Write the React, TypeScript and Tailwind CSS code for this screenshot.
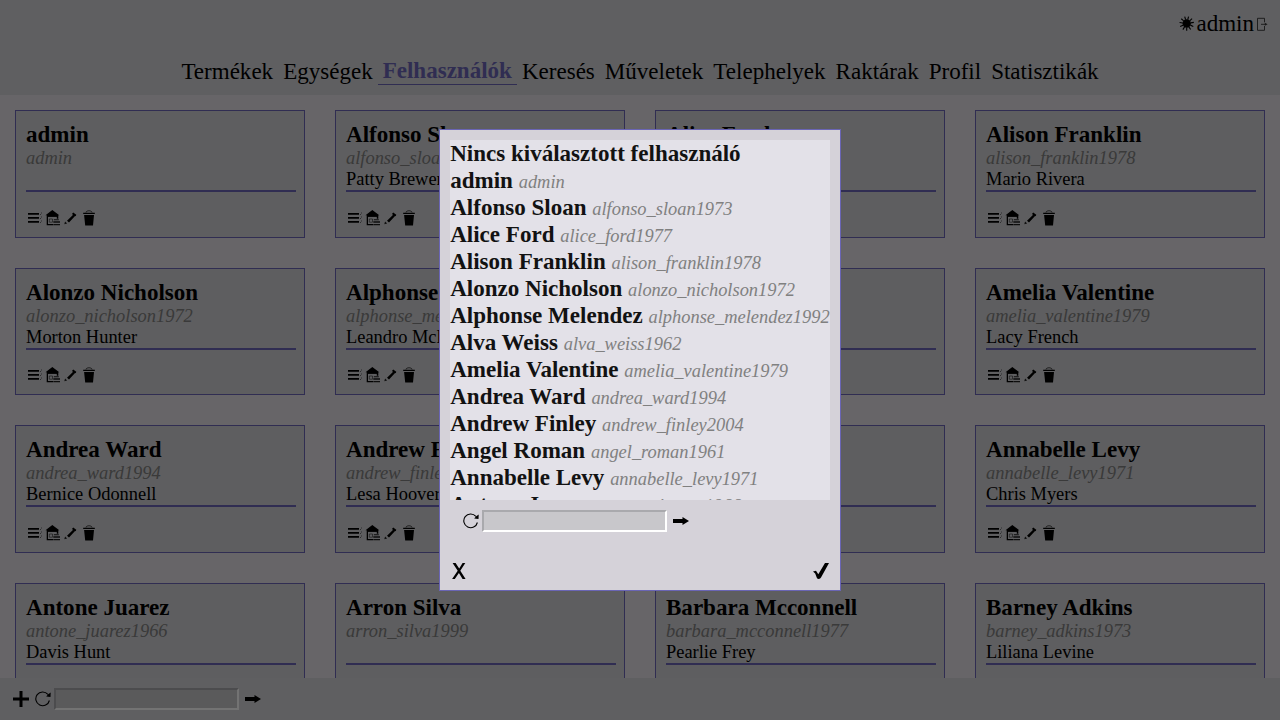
import type { ReactNode } from "react";

type User = { name: string; login: string; manager?: string };

const tabs = ["Termékek", "Egységek", "Felhasználók", "Keresés", "Műveletek", "Telephelyek", "Raktárak", "Profil", "Statisztikák"];

const users: User[] = [
  { name: "admin", login: "admin" },
  { name: "Alfonso Sloan", login: "alfonso_sloan1973", manager: "Patty Brewer" },
  { name: "Alice Ford", login: "alice_ford1977" },
  { name: "Alison Franklin", login: "alison_franklin1978", manager: "Mario Rivera" },
  { name: "Alonzo Nicholson", login: "alonzo_nicholson1972", manager: "Morton Hunter" },
  { name: "Alphonse Melendez", login: "alphonse_melendez1992", manager: "Leandro Mclean" },
  { name: "Alva Weiss", login: "alva_weiss1962" },
  { name: "Amelia Valentine", login: "amelia_valentine1979", manager: "Lacy French" },
  { name: "Andrea Ward", login: "andrea_ward1994", manager: "Bernice Odonnell" },
  { name: "Andrew Finley", login: "andrew_finley2004", manager: "Lesa Hoover" },
  { name: "Angel Roman", login: "angel_roman1961" },
  { name: "Annabelle Levy", login: "annabelle_levy1971", manager: "Chris Myers" },
  { name: "Antone Juarez", login: "antone_juarez1966", manager: "Davis Hunt" },
  { name: "Arron Silva", login: "arron_silva1999" },
  { name: "Barbara Mcconnell", login: "barbara_mcconnell1977", manager: "Pearlie Frey" },
  { name: "Barney Adkins", login: "barney_adkins1973", manager: "Liliana Levine" },
];

function Icon({ children, className = "" }: { children: ReactNode; className?: string }) {
  return (
    <svg viewBox="0 0 16 16" className={`block h-4 w-4 shrink-0 ${className}`} fill="currentColor">
      {children}
    </svg>
  );
}

const SunIcon = () => (
  <Icon>
    <circle cx="8.700" cy="7.500" r="4.2" />
    <g stroke="currentColor" strokeWidth="1.1">
      {[15, 48, 81, 114, 147, 180, 212, 245, 278, 311, 344].map((a) => (
        <path key={a} d="M8.700 3.500V.3" transform={`rotate(${a} 8.700 7.500)`} />
      ))}
    </g>
  </Icon>
);

const ExitIcon = () => (
  <svg viewBox="0 0 14 16" className="block h-4 w-[14px] shrink-0" fill="none" stroke="currentColor" strokeWidth="0.9" opacity=".75">
    <path d="M10.500 6.300V2.300h-7v12h7V10" />
    <path d="M7 8.300h5" />
    <path d="M10.800 6.800l2.800 1.500-2.800 1.500z" fill="currentColor" stroke="none" />
  </svg>
);

const ListIcon = () => (
  <Icon>
    <path d="M1 3.100h11v1.700H1zM1 7.100h11v1.700H1zM1 11.100h11v1.700H1z" />
    <path d="M14 2.500h1v1h-1zM13 4h1v1h-1zM14 6.500h1v1h-1zM13 8h1v1h-1zM14 10.500h1v1h-1zM13 12h1v1h-1z" opacity=".5" />
  </Icon>
);

const HouseIcon = () => (
  <Icon>
    <path d="M7.300 0L.5 5.300h1.200V15.300H8.500v-1.400H3V6.500h8.800V8.700h1.500V5.300h1z" />
    <path d="M2 4.800h10.500v2H2z" />
    <path d="M4.300 9h3.200v3.200H4.300z" fill="none" stroke="currentColor" strokeWidth=".6" opacity=".8" />
    <path d="M8.800 9.200h5v1h-5zM8.300 11.300h6.700v1.500H8.300zM8.800 14h6.200V15.300h-6.200z" opacity=".85" />
  </Icon>
);

const PencilIcon = () => (
  <Icon>
    <path d="M3 10.800L8.900 5 8.100 3.800 9.200 2.400 12.300 4.800 11.800 6 10.800 6.200 5 12.400z" />
    <path d="M1.100 11.500l2 2-2.800.800z" opacity=".85" />
  </Icon>
);

const TrashIcon = () => (
  <Icon>
    <path d="M5 2.500C5 .2 11 .2 11 2.500" fill="none" stroke="currentColor" strokeWidth=".9" opacity=".75" />
    <path d="M2.200 2.700h11.600v1.400H2.200zM3.100 5h9.900l-1 10.500H4.200z" />
  </Icon>
);

const PlusIcon = () => (
  <Icon>
    <path d="M6.500 0h3v6.500H16v3H9.500V16h-3V9.500H0v-3h6.500z" />
  </Icon>
);

const RefreshIcon = () => (
  <Icon>
    <path d="M12.900 3.300A6.900 6.900 0 1 0 14.400 9.500" fill="none" stroke="currentColor" strokeWidth="1.1" />
    <path d="M15.700 1.500l-.2 4.500-4.300-.5 2-2.200z" />
  </Icon>
);

const ArrowIcon = () => (
  <Icon>
    <path d="M0 6h9.500V3.900L16 8l-6.500 4.100V10H0z" />
  </Icon>
);

const CrossIcon = () => (
  <Icon>
    <path d="M1.600 0h3L8.200 5.600 11.600 0h2.700L9.300 7.700 14.600 16h-3L7.900 10 3.800 16H1.100L6.700 7.700z" />
  </Icon>
);

const CheckIcon = () => (
  <Icon>
    <path d="M0 8.600L3 7.800 5.300 11.300 12 0h4L8 14.600Q7.300 16 5.800 16 4.300 16 3.800 14.800L2.200 10.500z" />
  </Icon>
);

function UserCard({ user }: { user: User }) {
  return (
    <article className="h-[127.6px] min-w-0 border border-[#6a65b5] bg-[#d1d1d4] p-[10px]">
      <h2 className="h-[27px] text-[23.040px] leading-[27px] font-bold whitespace-nowrap">{user.name}</h2>
      <div className="h-[21px] text-[18.430px] leading-[21px] whitespace-nowrap text-[#808080] italic">{user.login}</div>
      <div className="h-[21px] text-[18.430px] leading-[21px] whitespace-nowrap">{user.manager}</div>
      <div className="h-[2px] w-[270px] bg-[#6a65b5]" />
      <div className="mt-[17.6px] flex gap-[2px] pl-px">
        <ListIcon />
        <HouseIcon />
        <span className="pl-px"><PencilIcon /></span>
        <span className="-ml-px"><TrashIcon /></span>
      </div>
    </article>
  );
}

function SearchInput() {
  return <input type="text" className="block h-[22px] w-[185px] border-2 border-t-[#a9a9ad] border-r-white border-b-white border-l-[#a9a9ad] bg-[#c8c7cb] outline-none" />;
}

function PickerDialog() {
  return (
    <section className="flex h-[462px] w-[402px] flex-col border border-[#6a65b5] bg-[#d5d2d9] p-[10px]">
      <ul className="h-[360px] overflow-hidden bg-[#e3e1e8] pl-[0.2px] text-[#121212]">
        <li className="h-[27px] text-[23.040px] leading-[27px] font-bold whitespace-nowrap">Nincs kiválasztott felhasználó</li>
        {users.map((u) => (
          <li key={u.login} className="h-[27px] text-[23.040px] leading-[27px] whitespace-nowrap">
            <b>{u.name}</b> <i className="text-[18.430px] text-[#808080]">{u.login}</i>
          </li>
        ))}
      </ul>
      <div className="mt-[10px] flex h-[22px] items-center pl-[13px]">
        <RefreshIcon />
        <div className="mr-[6px] ml-[3px]"><SearchInput /></div>
        <ArrowIcon />
      </div>
      <div className="mt-auto mb-px flex justify-between px-px">
        <CrossIcon />
        <CheckIcon />
      </div>
    </section>
  );
}

export default function App() {
  return (
    <div className="relative flex h-screen flex-col overflow-hidden bg-[#e5e0e6] font-['Liberation_Serif',serif] text-black">
      <header className="flex h-[95px] shrink-0 flex-col bg-[#d3d3d7] text-[23.040px] leading-[27px]">
        <div className="flex items-center justify-end pt-[10px] pr-[12px]">
          <SunIcon />
          <span className="pl-[2px]">admin</span>
          <ExitIcon />
        </div>
        <nav className="mt-[21px] flex justify-center">
          {tabs.map((t) =>
            t === "Felhasználók" ? (
              <a key={t} className="-mt-px h-[28px] border-b border-[#6a65b5] px-[5px] font-bold text-[#6a65b5]">{t}</a>
            ) : (
              <a key={t} className="px-[5px]">{t}</a>
            ),
          )}
        </nav>
      </header>
      <main className="grid min-h-0 flex-1 grid-cols-4 content-start gap-[30px] overflow-hidden px-[15px] pt-[15px]">
        {users.map((u) => (
          <UserCard key={u.login} user={u} />
        ))}
      </main>
      <footer className="flex h-[42px] shrink-0 items-center bg-[#d3d3d7] pl-[13px]">
        <PlusIcon />
        <div className="ml-[6px]"><RefreshIcon /></div>
        <div className="mr-[6px] ml-[3px]"><SearchInput /></div>
        <ArrowIcon />
      </footer>
      <div className="absolute inset-0 flex items-center justify-center bg-black/55">
        <PickerDialog />
      </div>
    </div>
  );
}
